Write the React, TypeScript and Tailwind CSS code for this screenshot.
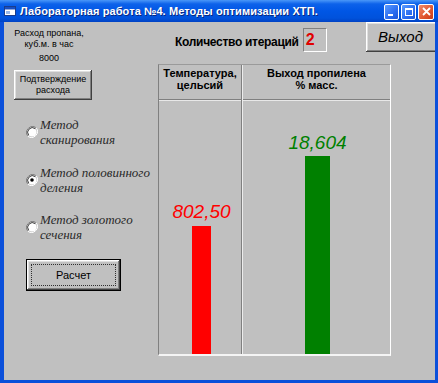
import React from "react";

const sans = { fontFamily: '"Liberation Sans", Arial, sans-serif' };
const serif = { fontFamily: '"Liberation Serif", "Times New Roman", serif' };

function Radio({ checked }: { checked?: boolean }) {
  return (
    <svg width="12" height="12" viewBox="0 0 12 12" className="shrink-0">
      <path d="M10.2 1.8 A6 6 0 0 0 1.8 10.2" fill="none" stroke="#808080" strokeWidth="1" />
      <path d="M1.8 10.2 A6 6 0 0 0 10.2 1.8" fill="none" stroke="#ffffff" strokeWidth="1" />
      <circle cx="6" cy="6" r="4.6" fill="#ffffff" />
      <path d="M9.3 2.7 A4.7 4.7 0 0 0 2.7 9.3" fill="none" stroke="#404040" strokeWidth="1" />
      {checked && <circle cx="6" cy="6" r="1.8" fill="#000" />}
    </svg>
  );
}

function RadioItem({ checked, l1, l2 }: { checked?: boolean; l1: string; l2: string }) {
  return (
    <div className="flex items-center ml-[22px] gap-[2px]">
      <Radio checked={checked} />
      <div className="text-[13px] leading-[15px] italic text-[#2a2a2a]" style={serif}>
        <div>{l1}</div>
        <div>{l2}</div>
      </div>
    </div>
  );
}

const btn3d =
  "bg-[#c0c0c0] shadow-[inset_-1px_-1px_#404040,inset_1px_1px_#ffffff,inset_-2px_-2px_#808080,inset_2px_2px_#dfdfdf]";

export default function App() {
  return (
    <div className="w-[438px] h-[383px] flex flex-col bg-[#0b50da] overflow-hidden" style={sans}>
      {/* Title bar */}
      <div className="h-[22px] shrink-0 flex items-center bg-[linear-gradient(to_bottom,#4a97f8_0%,#0d62ea_18%,#0056e5_50%,#0052dc_82%,#0042c4_100%)]">
        <svg width="12" height="10" viewBox="0 0 12 10" className="ml-[4px] mr-[4px]">
          <rect x="0.5" y="0.5" width="11" height="9" fill="#ffffff" stroke="#1a3c8c" />
          <rect x="1" y="1" width="10" height="2.5" fill="#1a4fc0" />
          <rect x="2" y="5" width="4" height="3" fill="#9ab8e8" />
        </svg>
        <span className="text-white text-[11px] font-bold tracking-[0.1px] [text-shadow:1px_1px_#0a2a80]">
          Лабораторная работа №4. Методы оптимизации ХТП.
        </span>
        <div className="ml-auto mr-[4px] flex gap-[2px] mt-[1px]">
          <div className="w-[15px] h-[16px] rounded-[2px] border border-white bg-[linear-gradient(135deg,#5a9cff,#2a6cf0_60%,#1d55d8)] relative">
            <div className="absolute left-[3px] bottom-[3px] w-[5px] h-[2px] bg-white" />
          </div>
          <div className="w-[15px] h-[16px] rounded-[2px] border border-white bg-[linear-gradient(135deg,#5a9cff,#2a6cf0_60%,#1d55d8)] relative">
            <div className="absolute left-[3px] top-[3px] w-[8px] h-[8px] border border-white border-t-2" />
          </div>
          <div className="w-[16px] h-[16px] rounded-[2px] border border-white bg-[linear-gradient(135deg,#f08a6a,#e0552e_60%,#c83a18)] flex items-center justify-center">
            <svg width="9" height="9" viewBox="0 0 9 9">
              <path d="M1 1 L8 8 M8 1 L1 8" stroke="#fff" strokeWidth="1.8" />
            </svg>
          </div>
        </div>
      </div>

      {/* Client area */}
      <div className="flex-1 flex ml-[4px] mr-[3px] mb-[3px] bg-[#c0c0c0] overflow-hidden">
        {/* Left column */}
        <div className="w-[154px] shrink-0 flex flex-col">
          <div className="w-[90px] mt-[6px] text-center text-[9px] leading-[11px] text-black">
            <div>Расход пропана,</div>
            <div>куб.м. в час</div>
            <div className="mt-[3px]">8000</div>
          </div>
          <div
            className={`${btn3d} mt-[6px] ml-[10px] w-[78px] h-[30px] flex flex-col items-center justify-center text-[9px] leading-[11px] text-black`}
          >
            <div>Подтверждение</div>
            <div>расхода</div>
          </div>
          <div className="mt-[17px]">
            <RadioItem l1="Метод" l2="сканирования" />
          </div>
          <div className="mt-[18px]">
            <RadioItem checked l1="Метод половинного" l2="деления" />
          </div>
          <div className="mt-[17px]">
            <RadioItem l1="Метод золотого" l2="сечения" />
          </div>
          <div className="mt-[17px] ml-[22px] w-[95px] h-[32px] border border-black">
            <div className={`${btn3d} w-full h-full p-[4px]`}>
              <div className="w-full h-full border border-dotted border-[#303030] flex items-center justify-center text-[11px] text-black">
                Расчет
              </div>
            </div>
          </div>
        </div>

        {/* Right area */}
        <div className="flex-1 flex flex-col">
          <div className="h-[42px] shrink-0 flex items-start">
            <div className="mt-[13px] ml-[17px] text-[12px] leading-[14px] font-bold tracking-[-0.3px] text-black">
              Количество итераций
            </div>
            <div className="mt-[6px] ml-[4px] w-[24px] h-[24px] border border-t-[#808080] border-l-[#808080] border-r-white border-b-white flex items-center pl-[2px] text-[16px] font-bold text-[#e00000]">
              2
            </div>
            <div
              className={`${btn3d} ml-auto mr-[-4px] w-[73px] h-[30px] flex items-center justify-center pr-[4px] text-[15px] italic text-black`}
            >
              Выход
            </div>
          </div>

          {/* Chart grid */}
          <div className="w-[233px] h-[292px] flex border-l border-t border-l-[#808080] border-t-[#9a9a9a] border-r border-r-white border-b-2 border-b-[#f4f4f4]">
            <div className="w-[82px] flex flex-col">
              <div className="h-[34px] flex flex-col items-center pt-[2px] text-[11px] leading-[12px] font-bold text-black">
                <div>Температура,</div>
                <div>цельсий</div>
              </div>
              <div className="h-[1px] bg-[#808080]" />
              <div className="h-[1px] bg-[#e8e8e8]" />
              <div className="flex-1 flex flex-col items-center justify-end pl-[3px]">
                <div className="text-[19px] leading-[19px] italic text-[#ff0000] mb-[5px]">802,50</div>
                <div className="w-[19px] h-[128px] bg-[#ff0000]" />
              </div>
            </div>
            <div className="w-[1px] bg-[#808080]" />
            <div className="w-[1px] bg-[#ececec]" />
            <div className="flex-1 flex flex-col">
              <div className="h-[34px] flex flex-col items-center pt-[2px] text-[11px] leading-[12px] font-bold text-black">
                <div>Выход пропилена</div>
                <div>% масс.</div>
              </div>
              <div className="h-[1px] bg-[#808080]" />
              <div className="h-[1px] bg-[#e8e8e8]" />
              <div className="flex-1 flex flex-col items-center justify-end pl-[2px]">
                <div className="text-[19px] leading-[19px] italic text-[#008000] mb-[4px]">18,604</div>
                <div className="w-[25px] h-[198px] bg-[#008000]" />
              </div>
            </div>
          </div>
        </div>
      </div>
    </div>
  );
}
